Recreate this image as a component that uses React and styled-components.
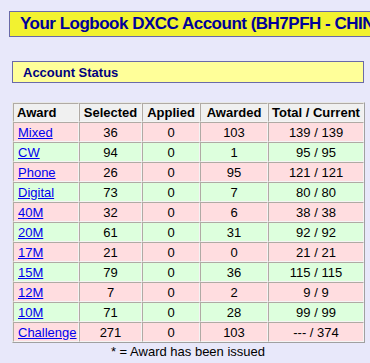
import React from "react";
import styled, { createGlobalStyle } from "styled-components";

const GlobalStyle = createGlobalStyle`
  html, body {
    margin: 0;
    padding: 0;
    overflow: hidden;
    background-color: #e8e8fa;
    font-family: "Liberation Sans", Arial, sans-serif;
  }
`;

const Page = styled.div`
  width: 370px;
  height: 363px;
  padding: 11px 0 0 9px;
  box-sizing: border-box;
  overflow: hidden;
`;

const TitleBar = styled.div`
  width: 420px;
  height: 26px;
  box-sizing: border-box;
  background-color: #f2f230;
  border: 1px solid #6a6aa8;
  border-right: none;
  padding-left: 10px;
  display: flex;
  align-items: center;
  white-space: nowrap;
  font-size: 17px;
  letter-spacing: -0.5px;
  font-weight: bold;
  color: #000099;
`;

const Content = styled.div`
  margin-left: 3px;
  width: 352px;
`;

const SectionBar = styled.div`
  margin-top: 24px;
  height: 22px;
  box-sizing: border-box;
  background-color: #ffff99;
  border: 1px solid #6a6aa8;
  padding-left: 10px;
  display: flex;
  align-items: center;
  font-size: 13px;
  font-weight: bold;
  color: #000080;
`;

const Table = styled.table`
  margin-top: 19px;
  width: 351px;
  table-layout: fixed;
  border-collapse: separate;
  border-spacing: 0;
  border-top: 1px solid #e8e8e8;
  border-left: 1px solid #e8e8e8;
  border-right: 1px solid #a0a0a0;
  border-bottom: 1px solid #a0a0a0;
  font-size: 13px;
`;

const Th = styled.th`
  width: ${(p) => p.$w}px;
  height: 19px;
  padding: 0 3px;
  background-color: #f0f0f0;
  border-top: 1px solid #b0aaa4;
  border-left: 1px solid #b0aaa4;
  border-right: 1px solid #f4f4f4;
  border-bottom: 1px solid #f4f4f4;
  text-align: ${(p) => (p.$left ? "left" : "center")};
  font-weight: bold;
  color: #000;
  white-space: nowrap;
  box-sizing: border-box;
`;

const Td = styled.td`
  height: 18px;
  padding: 0 4px;
  background-color: ${(p) => (p.$even ? "#ddffdd" : "#ffdde0")};
  border-top: 1px solid #b0aaa4;
  border-left: 1px solid #b0aaa4;
  border-right: 1px solid #f4f4f4;
  border-bottom: 1px solid #f4f4f4;
  text-align: ${(p) => (p.$left ? "left" : "center")};
  color: #000;
  white-space: nowrap;
`;

const AwardLink = styled.a`
  color: #0000ee;
  text-decoration: underline;
`;

const Note = styled.div`
  text-align: center;
  font-size: 13px;
  color: #000;
  margin-top: 1px;
`;

const rows = [
  ["Mixed", 36, 0, 103, "139 / 139"],
  ["CW", 94, 0, 1, "95 / 95"],
  ["Phone", 26, 0, 95, "121 / 121"],
  ["Digital", 73, 0, 7, "80 / 80"],
  ["40M", 32, 0, 6, "38 / 38"],
  ["20M", 61, 0, 31, "92 / 92"],
  ["17M", 21, 0, 0, "21 / 21"],
  ["15M", 79, 0, 36, "115 / 115"],
  ["12M", 7, 0, 2, "9 / 9"],
  ["10M", 71, 0, 28, "99 / 99"],
  ["Challenge", 271, 0, 103, "--- / 374"],
];

const App = () => {
  return (
    <Page>
      <GlobalStyle />
      <TitleBar>Your Logbook DXCC Account (BH7PFH - CHINA)</TitleBar>
      <Content>
        <SectionBar>Account Status</SectionBar>
        <Table>
          <thead>
            <tr>
              <Th $left $w={66}>Award</Th>
              <Th $w={63}>Selected</Th>
              <Th $w={58}>Applied</Th>
              <Th $w={68}>Awarded</Th>
              <Th $w={96}>Total / Current</Th>
            </tr>
          </thead>
          <tbody>
            {rows.map((r, i) => (
              <tr key={r[0]}>
                <Td $left $even={i % 2 === 1}>
                  <AwardLink href="#">{r[0]}</AwardLink>
                </Td>
                <Td $even={i % 2 === 1}>{r[1]}</Td>
                <Td $even={i % 2 === 1}>{r[2]}</Td>
                <Td $even={i % 2 === 1}>{r[3]}</Td>
                <Td $even={i % 2 === 1}>{r[4]}</Td>
              </tr>
            ))}
          </tbody>
        </Table>
        <Note>* = Award has been issued</Note>
      </Content>
    </Page>
  );
};

export default App;
